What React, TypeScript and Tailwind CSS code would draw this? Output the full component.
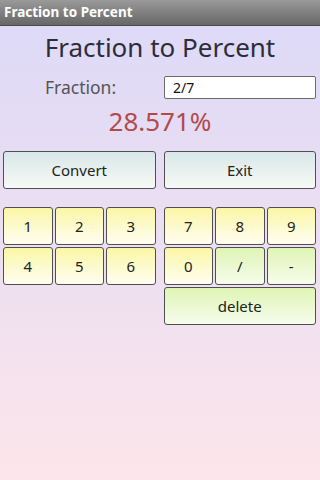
const LEFT_KEYS = ['1', '2', '3', '4', '5', '6'];
const RIGHT_KEYS = [
  { label: '7', green: false },
  { label: '8', green: false },
  { label: '9', green: false },
  { label: '0', green: false },
  { label: '/', green: true },
  { label: '-', green: true },
];

const yellow = 'bg-gradient-to-b from-[#fbf6a4] to-[#fffdf0]';
const green = 'bg-gradient-to-b from-[#def5b4] to-[#f7fcec]';

function Key({ label, isGreen = false, wide = false }: { label: string; isGreen?: boolean; wide?: boolean }) {
  return (
    <button
      className={`h-[38px] ${wide ? 'col-span-3' : ''} flex items-center justify-center rounded-[3px] border-[1.5px] border-[#4f4f4f] text-[15px] text-[#222] ${isGreen ? green : yellow}`}
    >
      {label}
    </button>
  );
}

export default function App() {
  return (
    <div
      className="w-[320px] h-[480px] flex flex-col bg-gradient-to-b from-[#dcd9f8] to-[#fce5ea] overflow-hidden"
      style={{ fontFamily: '"Noto Sans", "Open Sans", sans-serif' }}
    >
      <div className="h-[26px] shrink-0 flex items-center px-[4px] bg-gradient-to-b from-[#9a9a9a] to-[#676767] border-b border-[#4a4a4a]">
        <span className="text-white font-bold text-[13.5px] leading-none">Fraction to Percent</span>
      </div>

      <h1 className="mt-[5px] text-center text-[26px] leading-[32px] text-[#2d2d3a]">Fraction to Percent</h1>

      <div className="mt-[12px] flex items-center h-[24px]">
        <span className="ml-[45px] w-[119px] text-[17.5px] text-[#555]">Fraction:</span>
        <div className="w-[152px] h-[23px] bg-white border-[1.5px] border-[#6c6c6c] rounded-[2px] flex items-center pl-[8px] text-[14px] text-[#111]">
          2/7
        </div>
      </div>

      <div className="mt-[7px] text-center text-[26px] leading-[30px] text-[#b24a4a]">28.571%</div>

      <div className="mt-[15px] flex gap-[8px] pl-[3px] pr-[4px]">
        <button className="flex-1 h-[38px] rounded-[3px] border-[1.5px] border-[#505050] bg-gradient-to-b from-[#d8e8e8] to-[#f7f9f5] text-[15px] text-[#222]">
          Convert
        </button>
        <button className="flex-1 h-[38px] rounded-[3px] border-[1.5px] border-[#505050] bg-gradient-to-b from-[#d8e8e8] to-[#f7f9f5] text-[15px] text-[#222]">
          Exit
        </button>
      </div>

      <div className="mt-[18px] flex gap-[8px] pl-[3px] pr-[4px] items-start">
        <div className="flex-1 grid grid-cols-3 gap-[2px]">
          {LEFT_KEYS.map((k) => (
            <Key key={k} label={k} />
          ))}
        </div>
        <div className="flex-1 grid grid-cols-3 gap-[2px]">
          {RIGHT_KEYS.map((k) => (
            <Key key={k.label} label={k.label} isGreen={k.green} />
          ))}
          <Key label="delete" isGreen wide />
        </div>
      </div>
    </div>
  );
}
